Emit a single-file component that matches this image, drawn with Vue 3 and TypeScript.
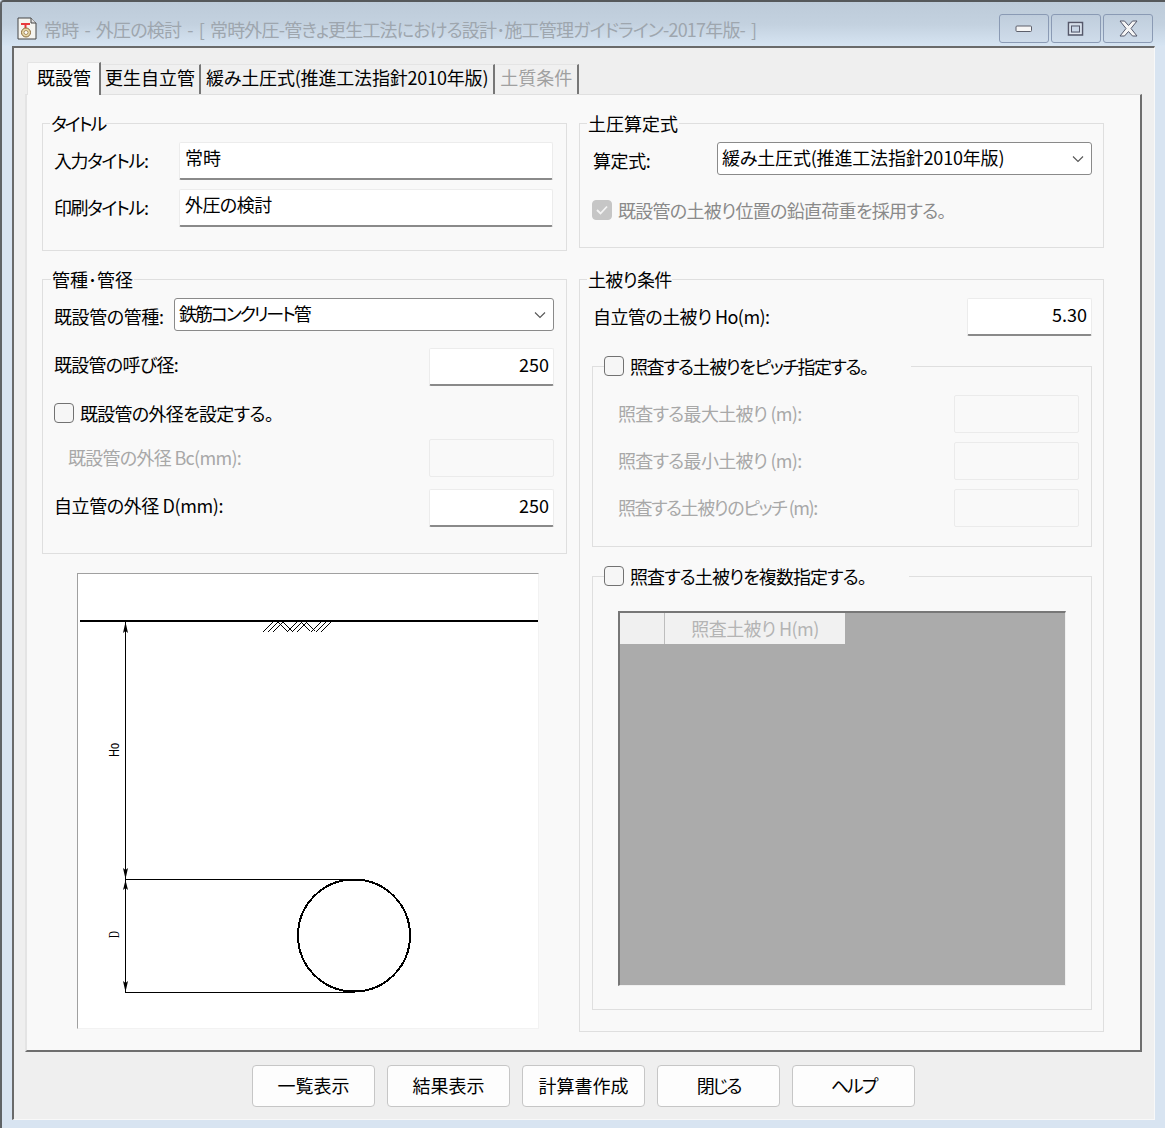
<script setup lang="ts">
const tabs = [
  { label: '既設管', state: 'active' },
  { label: '更生自立管', state: '' },
  { label: '緩み土圧式(推進工法指針2010年版)', state: 'tight-s wide-tab' },
  { label: '土質条件', state: 'off' },
]
const actions = [
  { label: '一覧表示', cls: '' },
  { label: '結果表示', cls: '' },
  { label: '計算書作成', cls: '' },
  { label: '閉じる', cls: 'tight-xl' },
  { label: 'ヘルプ', cls: 'tight-xl' },
]
const pitchRows = [
  { label: '照査する最大土被り (m):', cls: 'tight-m' },
  { label: '照査する最小土被り (m):', cls: 'tight-m' },
  { label: '照査する土被りのピッチ (m):', cls: 'tight-l' },
]
const slashes = [263, 268, 273, 287, 292, 297, 311, 316, 321]
const backslashes = [278, 283, 301, 306]
</script>

<template>
  <div class="window">
    <header class="titlebar">
      <svg class="app-icon" width="20" height="23" viewBox="0 0 20 23">
        <path d="M1 1h13l5 5v16H1z" fill="#f4f4f0" stroke="#444" />
        <path d="M14 1v5h5" fill="#ddd" stroke="#444" />
        <path d="M4 6h9v2H9.500v3h-2V8H4z" fill="#e8393c" />
        <circle cx="9" cy="15.500" r="4.500" fill="#e8d8a8" stroke="#8a6a3a" />
        <circle cx="9" cy="15.500" r="2" fill="#fff" stroke="#8a6a3a" stroke-width=".7" />
      </svg>
      <span class="window-title">常時 - 外圧の検討 - [ 常時外圧-管きょ更生工法における設計･施工管理ガイドライン-2017年版- ]</span>
      <div class="controls">
        <button class="ctl">
          <svg width="18" height="8" viewBox="0 0 18 8"><rect x="1" y="1" width="15.500" height="5.500" rx="1" fill="#f6f6f6" stroke="#5c5f6b" /></svg>
        </button>
        <button class="ctl">
          <svg width="18" height="16" viewBox="0 0 18 16"><rect x="1.500" y="1.500" width="14" height="12.500" fill="none" stroke="#56586a" stroke-width="1.500" /><rect x="3" y="3" width="11" height="9.500" fill="none" stroke="#e4e8ef" /><rect x="4.500" y="5" width="8" height="6" fill="#c9d6e6" stroke="#56586a" /></svg>
        </button>
        <button class="ctl">
          <svg width="19" height="17" viewBox="0 0 19 17"><path d="M1 1h4.500L9.500 5.500 13.500 1H18l-6 7.500 6 7.500h-4.500l-4-4.500-4 4.500H1l6-7.500z" fill="#f6f6f6" stroke="#55586a" /></svg>
        </button>
      </div>
    </header>

    <main class="client">
      <nav class="tabs">
        <div v-for="t in tabs" :key="t.label" class="tab" :class="t.state">{{ t.label }}</div>
      </nav>

      <section class="panel">
        <div class="col">
          <fieldset class="group g-title">
            <legend class="tight-xxl">タイトル</legend>
            <div class="row h38">
              <span class="tight-xl2 lift1">入力タイトル:</span>
              <div class="field wide">常時</div>
            </div>
            <div class="row h38 mt9">
              <span class="tight-xl2 lift1">印刷タイトル:</span>
              <div class="field wide"><span class="tight-s2">外圧の検討</span></div>
            </div>
          </fieldset>

          <fieldset class="group g-pipe">
            <legend>管種･管径</legend>
            <div class="row select-row">
              <span class="tight-xs drop">既設管の管種:</span>
              <div class="select s-left">
                <span class="tight-xxl2">鉄筋コンクリート管</span>
                <svg class="chev" width="12" height="8" viewBox="0 0 12 8"><path d="M1 1.500l5 5 5-5" fill="none" stroke="#555" stroke-width="1.100" /></svg>
              </div>
            </div>
            <div class="row h38 mt17">
              <span class="tight-m lift3">既設管の呼び径:</span>
              <div class="field num">250</div>
            </div>
            <label class="check-row mt17">
              <span class="cb"></span>
              <span class="tight-m">既設管の外径を設定する。</span>
            </label>
            <div class="row h38 mt16 off-text indent">
              <span class="tight-m lift1">既設管の外径 Bc(mm):</span>
              <div class="field num disabled"></div>
            </div>
            <div class="row h38 mt12">
              <span class="tight-xs lift3">自立管の外径 D(mm):</span>
              <div class="field num">250</div>
            </div>
          </fieldset>

          <div class="diagram">
            <svg width="460" height="454" viewBox="78 574 460 454">
              <g stroke="#000" fill="none">
                <path d="M80 621H538" stroke-width="2" />
                <path d="M125.500 622V992.500M125 879.500H355M125 992.500H355" />
                <circle class="pipe" cx="354" cy="935.500" r="56" />
                <g class="hatch">
                  <path v-for="x in slashes" :key="'s' + x" :d="`M${x} 632L${x + 10} 622`" />
                  <path v-for="x in backslashes" :key="'b' + x" :d="`M${x} 622L${x + 9} 631`" />
                </g>
              </g>
              <g fill="#000">
                <path d="M125.500 622l2.500 11-2.500-2-2.500 2z" />
                <path d="M125.500 879l2.500-11-2.500 2-2.500-2z" />
                <path d="M125.500 880l2.500 10-2.500-2-2.500 2z" />
                <path d="M125.500 992l2.500-11-2.500 2-2.500-2z" />
              </g>
              <text class="dim" textLength="14" lengthAdjust="spacingAndGlyphs" transform="translate(119 757) rotate(-90)">Ho</text>
              <text class="dim serif" textLength="7" lengthAdjust="spacingAndGlyphs" transform="translate(119 938) rotate(-90)">D</text>
            </svg>
          </div>
        </div>

        <div class="col">
          <fieldset class="group g-formula">
            <legend>土圧算定式</legend>
            <div class="row select-row">
              <span class="tight-xs drop">算定式:</span>
              <div class="select s-right">
                <span class="tight-s">緩み土圧式(推進工法指針2010年版)</span>
                <svg class="chev" width="12" height="8" viewBox="0 0 12 8"><path d="M1 1.500l5 5 5-5" fill="none" stroke="#555" stroke-width="1.100" /></svg>
              </div>
            </div>
            <label class="check-row locked">
              <span class="cb on">
                <svg width="14" height="12" viewBox="0 0 14 12"><path d="M2 6l3.500 3.500L12 2.500" fill="none" stroke="#f4f4f4" stroke-width="1.800" /></svg>
              </span>
              <span class="tight-m">既設管の土被り位置の鉛直荷重を採用する。</span>
            </label>
          </fieldset>

          <fieldset class="group g-cover">
            <legend class="tight-m">土被り条件</legend>
            <div class="row h38">
              <span class="tight-s2 lift1">自立管の土被り Ho(m):</span>
              <div class="field num">5.30</div>
            </div>

            <fieldset class="sub g-pitch">
              <legend>
                <span class="cb"></span>
                <span class="tight-l">照査する土被りをピッチ指定する。</span>
              </legend>
              <div v-for="r in pitchRows" :key="r.label" class="pitch-row off-text">
                <span class="lift1" :class="r.cls">{{ r.label }}</span>
                <div class="field num disabled"></div>
              </div>
            </fieldset>

            <fieldset class="sub g-multi">
              <legend>
                <span class="cb"></span>
                <span class="tight-n">照査する土被りを複数指定する。</span>
              </legend>
              <div class="grid">
                <div class="grid-corner"></div>
                <div class="grid-head"><span class="tight-s2">照査土被り H(m)</span></div>
              </div>
            </fieldset>
          </fieldset>
        </div>
      </section>

      <footer class="actions">
        <button v-for="a in actions" :key="a.label" class="btn" :class="a.cls">{{ a.label }}</button>
      </footer>
    </main>
  </div>
</template>

<style>
html,
body {
  margin: 0;
  padding: 0;
  background: #d8e4f1;
}
</style>

<style scoped>
.window {
  box-sizing: border-box;
  width: 1165px;
  height: 1128px;
  display: flex;
  flex-direction: column;
  overflow: hidden;
  background: #d8e4f1;
  border-left: 2px solid #5f6366;
  border-top: 2px solid #55585a;
  border-top-left-radius: 4px;
  color: #000;
  font-family: "Noto Sans CJK JP", "Noto Sans", sans-serif;
  font-size: 18px;
  font-feature-settings: "palt";
}
.tight-xs { letter-spacing: -0.4px; }
.tight-s { letter-spacing: -0.18px; }
.tight-s2 { letter-spacing: -0.55px; }
.tight-m { letter-spacing: -0.7px; }
.tight-n { letter-spacing: -0.9px; }
.tight-l { letter-spacing: -1.45px; }
.tight-xl2 { letter-spacing: -1.4px; }
.tight-xl { letter-spacing: -2.1px; }
.tight-xxl { letter-spacing: -2px; }
.tight-xxl2 { letter-spacing: -2.1px; }
.lift1 { margin-bottom: 2px; }
.lift3 { margin-bottom: 6px; }
.drop { margin-top: 2px; }
.titlebar {
  box-sizing: border-box;
  height: 44px;
  flex: none;
  display: flex;
  align-items: flex-start;
  padding: 14px 12px 0 15px;
  background: linear-gradient(#bdcbd9, #c3d1df 50%, #d6e4f2);
}
.app-icon {
  flex: none;
  margin-top: 1px;
}
.window-title {
  margin: 1px 0 0 7px;
  color: #9ea6ae;
  line-height: 24px;
  white-space: nowrap;
  letter-spacing: -0.81px;
  word-spacing: 2.8px;
}
.controls {
  margin-left: auto;
  margin-top: -2px;
  display: flex;
  gap: 2px;
}
.ctl {
  box-sizing: border-box;
  width: 50px;
  height: 29px;
  padding: 0;
  display: flex;
  align-items: center;
  justify-content: center;
  background: linear-gradient(#bfcddc, #cfdcea);
  border: 1px solid #8a9ab4;
  border-radius: 3px;
}
.client {
  flex: 1;
  margin: 0 10px 8px 10px;
  padding: 14px 12px 0 11px;
  background: #efefef;
  border-left: 2px solid #6a6a6a;
  border-top: 2px solid #6a6a6a;
  border-right: 1px solid #f8f8f8;
  border-bottom: 1px solid #f8f8f8;
  box-sizing: border-box;
  display: flex;
  flex-direction: column;
}
.tabs {
  display: flex;
  align-items: flex-end;
  height: 32px;
  padding-left: 2px;
  flex: none;
}
.tab {
  box-sizing: border-box;
  height: 30px;
  padding: 0 4px 0 3px;
  line-height: 24px;
  white-space: nowrap;
  background: #f0f0f0;
  border-top: 1px solid #e4e4e4;
  border-right: 2px solid #777;
  border-left: 1px solid #efefef;
}
.tab.wide-tab {
  padding: 0 5px 0 4px;
}
.tab.off {
  padding: 0 5px 0 4px;
  color: #a0a0a0;
}
.tab.active {
  height: 33px;
  margin-bottom: -1px;
  position: relative;
  padding: 0 8px 0 9px;
  background: #f9f9f9;
  border-left: 1px solid #e4e4e4;
  line-height: 29px;
  border-top-left-radius: 2px;
}
.panel {
  box-sizing: border-box;
  height: 958px;
  flex: none;
  display: grid;
  grid-template-columns: 525px 525px;
  column-gap: 12px;
  align-content: start;
  padding: 17px 0 0 15px;
  background: #f9f9f9;
  border-left: 2px solid #e4e4e4;
  border-top: 1px solid #e0e0e0;
  border-right: 2px solid #6e6e6e;
  border-bottom: 2px solid #6e6e6e;
}
.col {
  display: flex;
  flex-direction: column;
  min-width: 0;
}
.group,
.sub {
  box-sizing: border-box;
  margin: 0;
  padding: 0;
  min-width: 0;
  border: 1px solid #dfdfdf;
}
.group > legend {
  padding: 0 1px;
  height: 22px;
  line-height: 22px;
}
.g-title {
  height: 139px;
  padding: 8px 13px 0 11px;
}
.g-title > legend {
  margin-left: -4px;
}
.g-pipe {
  height: 286px;
  margin-top: 17px;
  padding: 8px 12px 0 11px;
}
.g-pipe > legend {
  margin-left: -3px;
}
.g-formula {
  height: 136px;
  padding: 8px 11px 0 13px;
}
.g-formula > legend {
  margin-left: -6px;
}
.g-cover {
  height: 764px;
  margin-top: 20px;
  padding: 8px 11px 0 13px;
}
.g-cover > legend {
  margin-left: -6px;
}
.row {
  display: flex;
  align-items: center;
  justify-content: space-between;
  white-space: nowrap;
}
.h38 {
  height: 38px;
}
.mt9 {
  margin-top: 9px;
}
.mt12 {
  margin-top: 12px;
}
.mt16 {
  margin-top: 16px;
}
.mt17 {
  margin-top: 17px;
}
.indent {
  padding-left: 14px;
}
.select-row {
  height: 33px;
}
.field {
  box-sizing: border-box;
  height: 38px;
  padding: 0 4px 6px 5px;
  display: flex;
  align-items: center;
  line-height: 24px;
  background: #fff;
  border: 1px solid #ececec;
  border-bottom: 2px solid #8a8a8a;
  border-radius: 2px;
}
.wide {
  width: 374px;
  padding-bottom: 8px;
}
.num {
  width: 125px;
  justify-content: flex-end;
}
.disabled {
  background: #f9f9f9;
  border: 1px solid #ebebeb;
}
.select {
  box-sizing: border-box;
  height: 33px;
  padding: 0 0 4px 4px;
  display: flex;
  align-items: center;
  position: relative;
  background: #fff;
  border: 1px solid #8a8a8a;
  border-radius: 3px;
}
.s-left {
  width: 380px;
}
.s-right {
  width: 375px;
}
.chev {
  position: absolute;
  right: 7px;
  top: 12px;
}
.check-row {
  display: flex;
  align-items: center;
  gap: 6px;
  height: 20px;
  white-space: nowrap;
}
.cb {
  box-sizing: border-box;
  flex: none;
  width: 20px;
  height: 20px;
  display: inline-flex;
  align-items: center;
  justify-content: center;
  background: #f6f6f6;
  border: 1px solid #727272;
  border-radius: 4px;
}
.cb.on {
  background: #c6c6c6;
  border-color: #c6c6c6;
}
.locked {
  margin-top: 25px;
  color: #8a8a8a;
  margin-left: -1px;
}
.off-text {
  color: #a8a8a8;
}
.sub > legend {
  margin-left: -14px;
  padding: 0;
  height: 22px;
  display: flex;
  align-items: center;
  gap: 6px;
  white-space: nowrap;
  line-height: 22px;
}
.g-cover > .sub {
  margin-left: -1px;
}
.g-pitch {
  height: 192px;
  margin-top: 19px;
  padding: 18px 12px 0 25px;
}
.g-pitch > legend {
  width: 307px;
}
.g-multi {
  height: 445px;
  margin-top: 18px;
  padding: 24px 25px 0 25px;
}
.g-multi > legend {
  width: 305px;
}
.pitch-row {
  height: 38px;
  margin-bottom: 9px;
  display: flex;
  align-items: center;
  justify-content: space-between;
}
.grid {
  box-sizing: border-box;
  height: 375px;
  display: flex;
  align-items: flex-start;
  background: #ababab;
  border-top: 2px solid #777;
  border-left: 2px solid #777;
  border-right: 1px solid #f0f0f0;
  border-bottom: 1px solid #f0f0f0;
}
.grid-corner {
  box-sizing: border-box;
  width: 45px;
  height: 31px;
  background: #f0f0f0;
  border-right: 1px solid #bdbdbd;
}
.grid-head {
  width: 180px;
  height: 31px;
  line-height: 30px;
  text-align: center;
  color: #b4b4b4;
  background: #f1f1f1;
}
.diagram {
  box-sizing: border-box;
  width: 462px;
  height: 456px;
  margin: 19px 0 0 35px;
  background: #fff;
  border-top: 1px solid #a0a0a0;
  border-left: 1px solid #a0a0a0;
  border-right: 1px solid #f2f2f2;
  border-bottom: 1px solid #f2f2f2;
  overflow: hidden;
}
.diagram svg {
  display: block;
}
.pipe {
  stroke-width: 2;
  shape-rendering: crispEdges;
}
.hatch {
  stroke-width: 1;
  shape-rendering: crispEdges;
}
.dim {
  font-family: "Liberation Sans", sans-serif;
  font-size: 15px;
  fill: #000;
}
.dim.serif {
  font-family: "Liberation Serif", serif;
}
.actions {
  flex: 1;
  display: flex;
  justify-content: center;
  gap: 12px;
  padding-top: 13px;
}
.btn {
  box-sizing: border-box;
  width: 123px;
  height: 42px;
  padding: 0 0 2px;
  font: inherit;
  font-feature-settings: "palt";
  color: #000;
  background: #fdfdfd;
  border: 1px solid #c6c6c6;
  border-radius: 4px;
}
</style>
